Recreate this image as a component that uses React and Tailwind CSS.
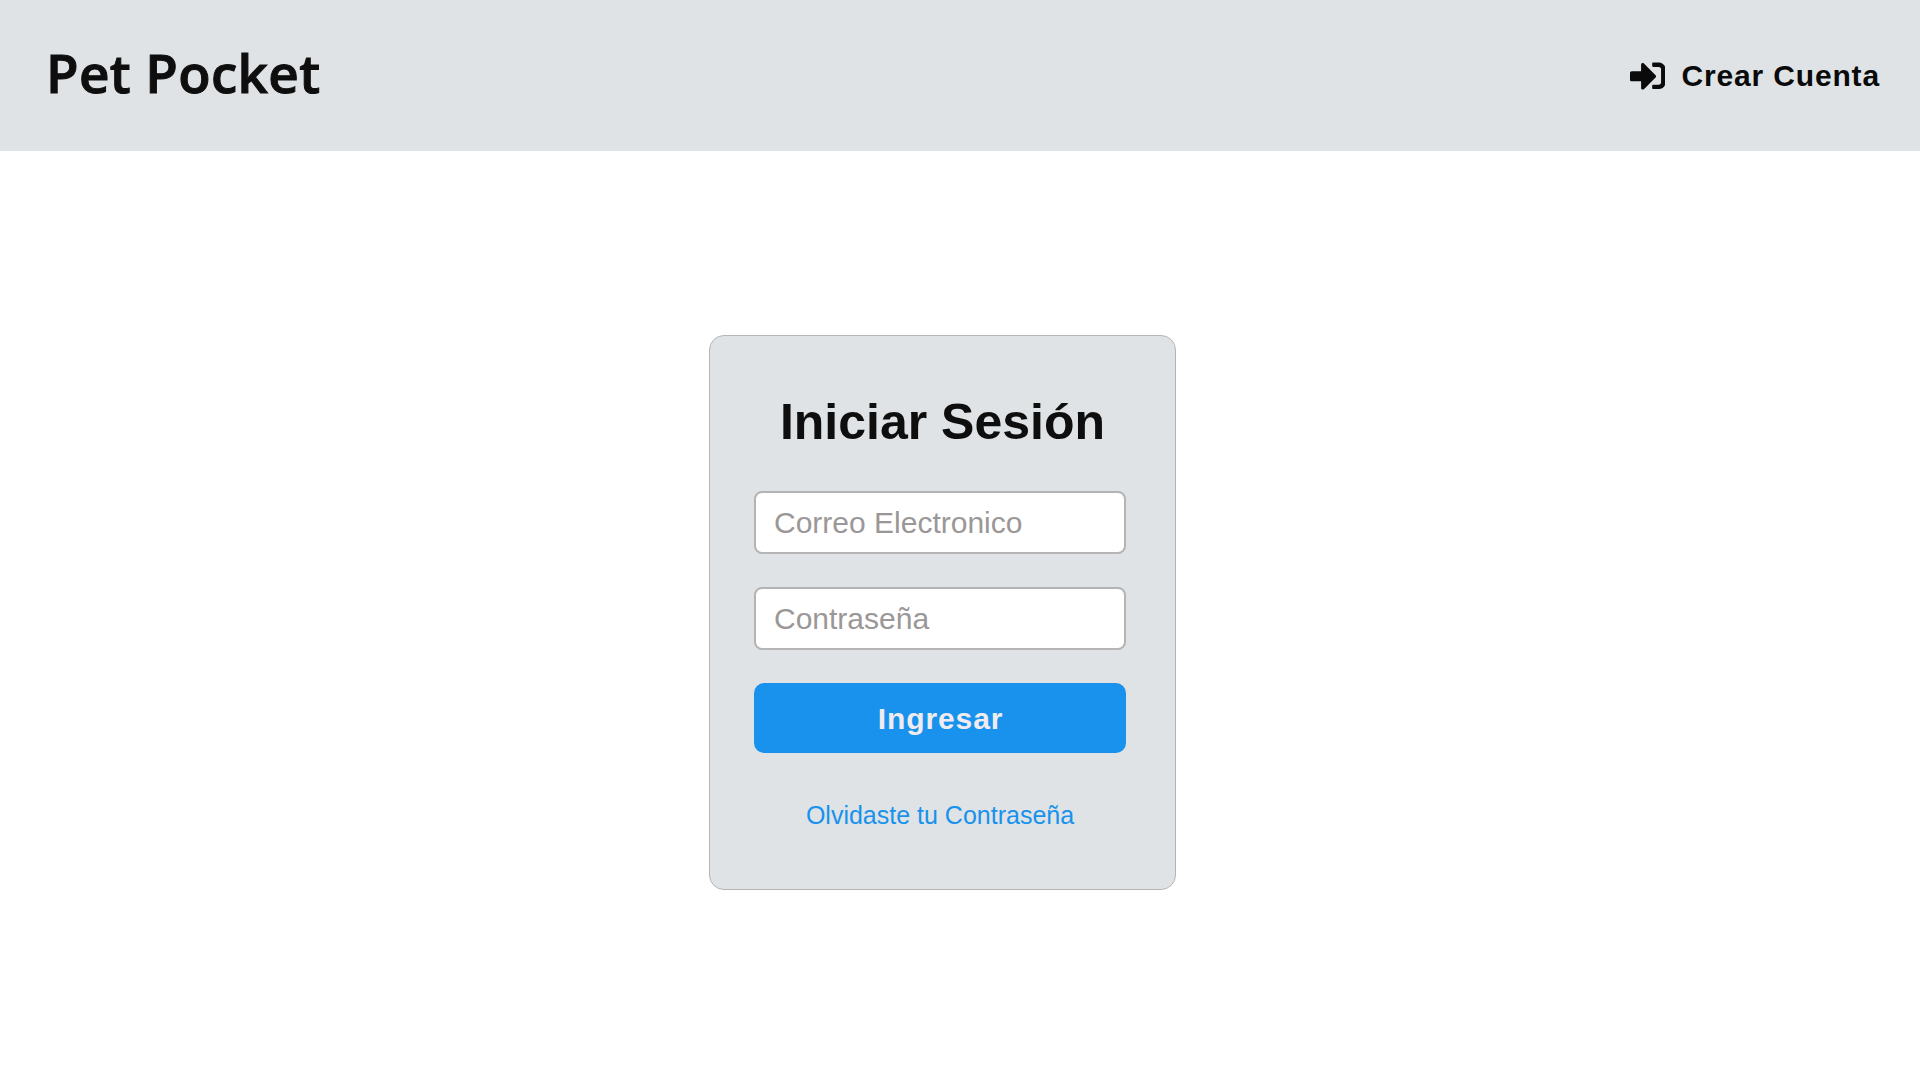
import { FaSignInAlt } from "react-icons/fa";

export default function App() {
  return (
    <div className="flex min-h-screen flex-col bg-white font-['Liberation_Sans',Arial,sans-serif] text-[#0e0e0e]">
      <header className="flex h-[151px] items-center justify-between bg-[#dfe3e5] pr-10 pl-[46px]">
        <h1 className="pb-[7px] font-['Open_Sans',sans-serif] text-[53px] leading-none font-semibold tracking-[0.35px] [-webkit-text-stroke:1px_#0e0e0e]">Pet Pocket</h1>
        <a className="flex items-center gap-4 text-[30px] leading-none font-bold tracking-[0.85px] text-[#0a0a0a]" href="#">
          <FaSignInAlt className="size-[35.5px]" />
          Crear Cuenta
        </a>
      </header>
      <main className="ml-[709px] pt-[184px]">
        <form className="flex h-[555px] w-[467px] flex-col rounded-[15px] border border-[#b5b5b5] bg-[#dfe3e5] pt-[58px] pr-[49px] pl-11">
          <h2 className="ml-[5px] text-center text-[50px] leading-[57px] font-bold whitespace-nowrap">Iniciar Sesión</h2>
          <input
            className="mt-10 h-[63px] rounded-lg border-2 border-[#b5b3b3] bg-white px-[18px] pt-px text-[30px] placeholder:text-[#9b9797]"
            placeholder="Correo Electronico"
          />
          <input
            type="password"
            className="mt-[33px] h-[63px] rounded-lg border-2 border-[#b5b3b3] bg-white px-[18px] text-[30px] placeholder:text-[#9b9797]"
            placeholder="Contraseña"
          />
          <button type="button" className="mt-[33px] h-[70px] rounded-[10px] bg-[#1892ec] pl-px text-[30px] font-bold tracking-[0.9px] text-[#efebef]">
            Ingresar
          </button>
          <a className="mt-[47px] text-center text-[25px] leading-[30px] text-[#1892ec]" href="#">
            Olvidaste tu Contraseña
          </a>
        </form>
      </main>
    </div>
  );
}
